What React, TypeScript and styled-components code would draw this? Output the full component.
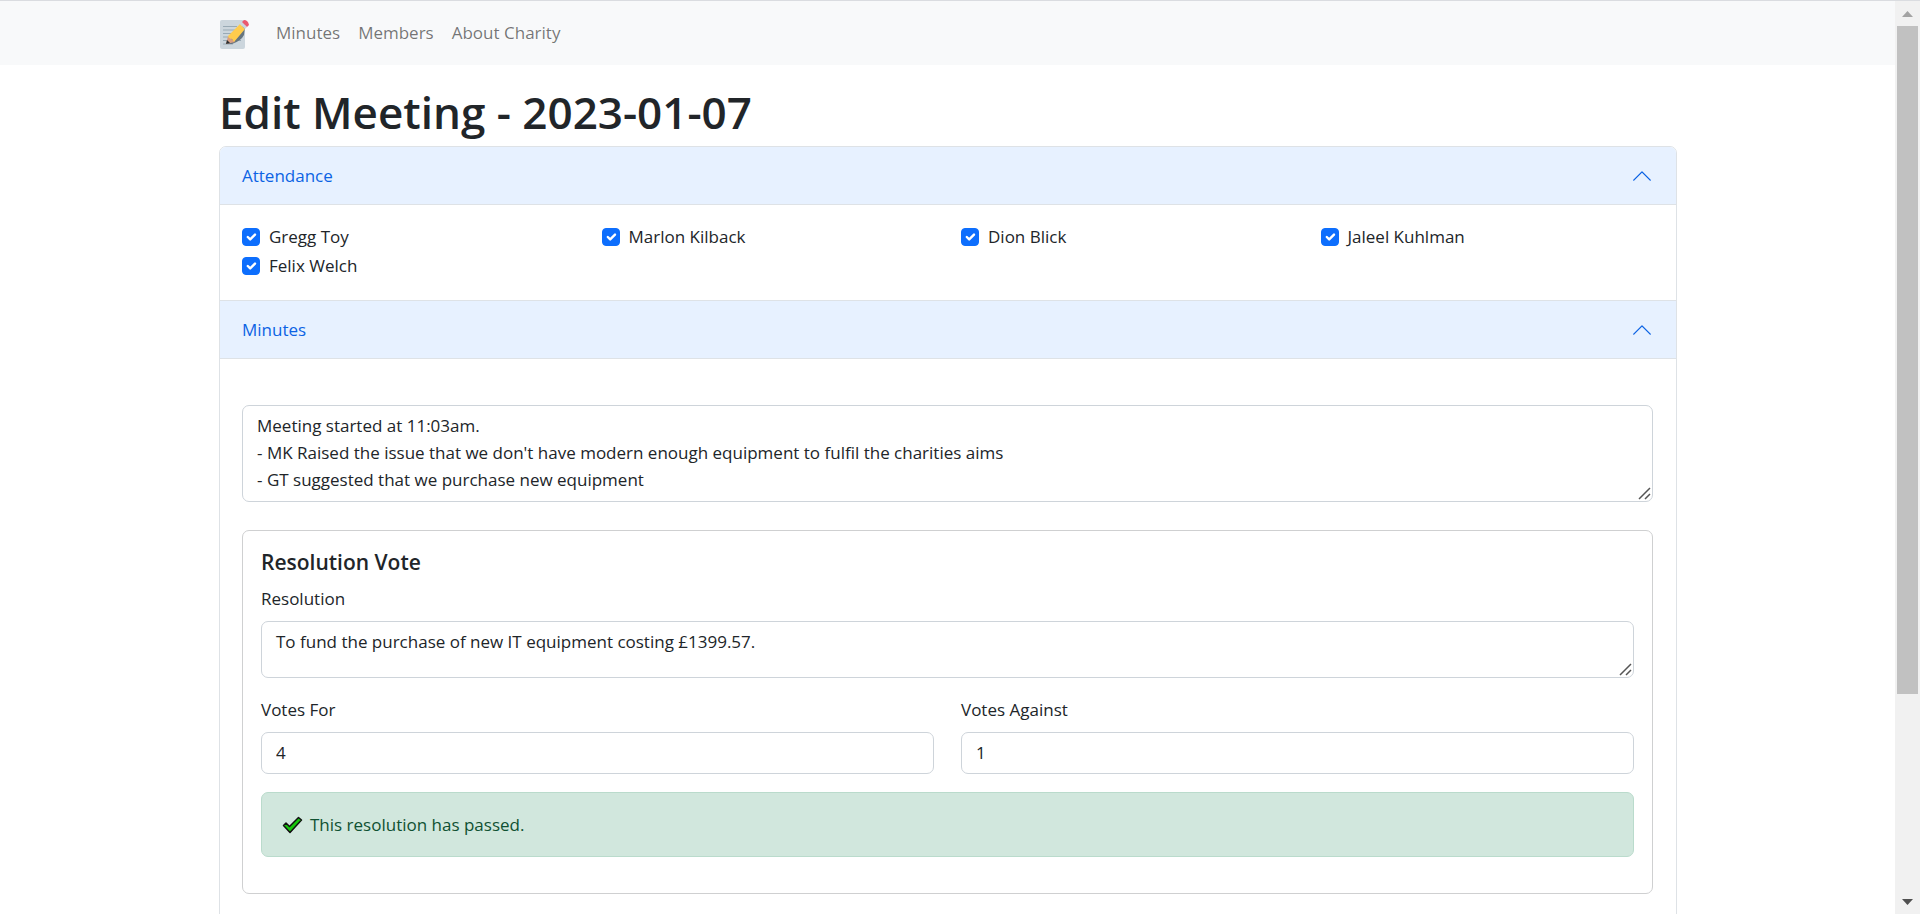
import React, { useState } from "react";
import styled, { createGlobalStyle } from "styled-components";

const GlobalStyle = createGlobalStyle`
  *, *::before, *::after { box-sizing: border-box; }
  body {
    margin: 0;
    background: #fff;
    color: #212529;
    font-family: "Segoe UI", "Open Sans", "Noto Sans", sans-serif;
    font-size: 17px;
    line-height: 27px;
  }
`;

const Shell = styled.div`
  display: flex;
  height: 100vh;
  border-top: 1px solid #dadce0;
`;

const Page = styled.div`
  flex: 1;
  min-width: 0;
  overflow-y: auto;
  scrollbar-width: none;
`;

const ScrollTrack = styled.div`
  display: flex;
  flex-direction: column;
  align-items: center;
  flex: none;
  width: 25px;
  padding: 0 2px;
  background: #f1f1f1;
`;

const ScrollArrow = styled.svg`
  flex: none;
  width: 21px;
  height: 25px;
`;

const ScrollThumb = styled.div`
  flex: 668;
  width: 100%;
  background: #c1c1c1;
`;

const ScrollRest = styled.div`
  flex: 195;
`;

const Container = styled.div`
  max-width: 1485px;
  margin: 0 auto;
  padding: 0 13px 0 14px;
`;

const Navbar = styled.nav`
  background: #f8f9fa;
`;

const NavInner = styled(Container)`
  display: flex;
  align-items: center;
  height: 64px;
`;

const Brand = styled.a`
  display: flex;
  margin-right: 18px;
  padding-top: 2px;
`;

const Logo = styled.svg`
  width: 30px;
  height: 32px;
`;

const NavLink = styled.a`
  padding: 8px 9px 10px;
  color: rgba(0, 0, 0, 0.55);
  text-decoration: none;
`;

const Title = styled.h1`
  margin: 20px 0 7px;
  font-size: 44px;
  font-weight: 600;
  line-height: 54px;
`;

const Accordion = styled.main`
  border: 1px solid #dee2e6;
  border-radius: 7px;
  overflow: hidden;
`;

const Section = styled.section`
  & + & {
    border-top: 1px solid #dee2e6;
  }
`;

const SectionHeading = styled.h2`
  margin: 0;
  font: inherit;
`;

const SectionButton = styled.button`
  display: flex;
  align-items: center;
  justify-content: space-between;
  width: 100%;
  height: 58px;
  padding: 0 23px 0 22px;
  border: 0;
  border-bottom: 1px solid #dee2e6;
  background: #e7f1ff;
  color: #0c63e4;
  font: inherit;
  text-align: left;
  cursor: pointer;
`;

const Chevron = styled.svg<{ $open: boolean }>`
  width: 22px;
  height: 22px;
  transform: ${(p) => (p.$open ? "rotate(180deg)" : "none")};
`;

const SectionBody = styled.div`
  padding: 18px 23px 19px 22px;
`;

const MemberGrid = styled.div`
  display: grid;
  grid-template-columns: repeat(4, 1fr);
  column-gap: 27px;
  row-gap: 2px;
  padding-bottom: 2px;
`;

const Member = styled.label`
  display: flex;
  align-items: center;
  gap: 9px;
`;

const Checkbox = styled.input`
  appearance: none;
  width: 18px;
  height: 18px;
  margin: 0;
  border: 1px solid #ced4da;
  border-radius: 4px;
  &:checked {
    border-color: #0d6efd;
    background: #0d6efd
      url("data:image/svg+xml,%3Csvg xmlns='http://www.w3.org/2000/svg' viewBox='0 0 20 20'%3E%3Cpath fill='none' stroke='%23fff' stroke-linecap='round' stroke-linejoin='round' stroke-width='3' d='m6 10 3 3 6-6'/%3E%3C/svg%3E")
      center / contain no-repeat;
  }
`;

const MinutesField = styled.div`
  margin: 28px 0;
`;

const TextAreaWrap = styled.div`
  position: relative;
  display: flex;
`;

const TextArea = styled.textarea`
  display: block;
  width: 100%;
  padding: 6px 14px 8px;
  border: 1px solid #ced4da;
  border-radius: 7px;
  background: #fff;
  color: inherit;
  font: inherit;
  resize: none;
  overflow: hidden;
`;

const MinutesArea = styled(TextArea)`
  height: 97px;
`;

const ResolutionArea = styled(TextArea)`
  height: 57px;
`;

const Grip = styled.svg`
  position: absolute;
  right: 2px;
  bottom: 2px;
  width: 13px;
  height: 13px;
`;

const Card = styled.section`
  margin-bottom: 28px;
  padding: 18px;
  border: 1px solid #cfd0d1;
  border-radius: 7px;
`;

const CardTitle = styled.h3`
  margin: 0 0 9px;
  font-size: 21px;
  font-weight: 600;
  line-height: 27px;
`;

const Field = styled.div`
  margin-bottom: 18px;
`;

const Label = styled.label`
  display: block;
  margin-bottom: 9px;
`;

const VoteGrid = styled.div`
  display: grid;
  grid-template-columns: 1fr 1fr;
  column-gap: 27px;
`;

const Input = styled.input`
  display: block;
  width: 100%;
  height: 42px;
  padding: 0 14px 2px;
  border: 1px solid #ced4da;
  border-radius: 7px;
  color: inherit;
  font: inherit;
`;

const Alert = styled.div`
  display: flex;
  align-items: center;
  gap: 7px;
  margin-bottom: 18px;
  padding: 18px 20px;
  border: 1px solid #badbcc;
  border-radius: 7px;
  background: #d1e7dd;
  color: #0f5132;
`;

const Tick = styled.svg`
  width: 21px;
  height: 18px;
`;

const members = ["Gregg Toy", "Marlon Kilback", "Dion Blick", "Jaleel Kuhlman", "Felix Welch"];

const notes = `Meeting started at 11:03am.
- MK Raised the issue that we don't have modern enough equipment to fulfil the charities aims
- GT suggested that we purchase new equipment`;

function ResizeGrip() {
  return (
    <Grip viewBox="0 0 13 13" aria-hidden="true">
      <path d="M1 12 12 1M7 12l5-5" stroke="#555" strokeWidth="1.5" />
    </Grip>
  );
}

function AccordionSection({ title, children }: { title: string; children: React.ReactNode }) {
  const [open, setOpen] = useState(true);
  return (
    <Section>
      <SectionHeading>
        <SectionButton type="button" aria-expanded={open} onClick={() => setOpen(!open)}>
          {title}
          <Chevron $open={open} viewBox="0 0 16 16" fill="currentColor" aria-hidden="true">
            <path d="M1.646 4.646a.5.5 0 0 1 .708 0L8 10.293l5.646-5.647a.5.5 0 0 1 .708.708l-6 6a.5.5 0 0 1-.708 0l-6-6a.5.5 0 0 1 0-.708z" />
          </Chevron>
        </SectionButton>
      </SectionHeading>
      {open && <SectionBody>{children}</SectionBody>}
    </Section>
  );
}

export default function App() {
  return (
    <>
      <GlobalStyle />
      <Shell>
        <Page>
          <Navbar>
            <NavInner>
              <Brand href="#" aria-label="Home">
                <Logo viewBox="0 0 30 32" aria-hidden="true">
                  <rect x="1" y="2" width="25" height="29" rx="2" fill="#ccd6dd" />
                  <path d="M4 8.500h14M4 12h12M4 15.500h18M4 19h18M4 22.500h18M4 26h10" stroke="#99aab5" strokeWidth="1" />
                  <path d="m8 26 5 0q9-3 12-9l1-8-4-1z" fill="#66757f" />
                  <path d="m7 26 2-8 7 6z" fill="#d99e82" />
                  <path d="m7 26 1-4 3 3z" fill="#292f33" />
                  <path d="M9 18 21 6l5 5-11 13-2-3-3-1z" fill="#ffcc4d" />
                  <path d="m21 6 2-2 5 5-2 2z" fill="#ccd6dd" />
                  <path d="m23 4 2-2q4 0 5 5l-2 2z" fill="#ea596e" />
                </Logo>
              </Brand>
              <NavLink href="#minutes">Minutes</NavLink>
              <NavLink href="#members">Members</NavLink>
              <NavLink href="#about">About Charity</NavLink>
            </NavInner>
          </Navbar>
          <Container>
            <Title>Edit Meeting - 2023-01-07</Title>
            <Accordion>
              <AccordionSection title="Attendance">
                <MemberGrid>
                  {members.map((name) => (
                    <Member key={name}>
                      <Checkbox type="checkbox" defaultChecked />
                      {name}
                    </Member>
                  ))}
                </MemberGrid>
              </AccordionSection>
              <AccordionSection title="Minutes">
                <MinutesField>
                  <TextAreaWrap>
                    <MinutesArea aria-label="Meeting notes" defaultValue={notes} />
                    <ResizeGrip />
                  </TextAreaWrap>
                </MinutesField>
                <Card>
                  <CardTitle>Resolution Vote</CardTitle>
                  <Field>
                    <Label htmlFor="resolution">Resolution</Label>
                    <TextAreaWrap>
                      <ResolutionArea
                        id="resolution"
                        defaultValue="To fund the purchase of new IT equipment costing £1399.57."
                      />
                      <ResizeGrip />
                    </TextAreaWrap>
                  </Field>
                  <VoteGrid>
                    <Field>
                      <Label htmlFor="votes-for">Votes For</Label>
                      <Input id="votes-for" inputMode="numeric" defaultValue="4" />
                    </Field>
                    <Field>
                      <Label htmlFor="votes-against">Votes Against</Label>
                      <Input id="votes-against" inputMode="numeric" defaultValue="1" />
                    </Field>
                  </VoteGrid>
                  <Alert role="status">
                    <Tick viewBox="0 0 21 18" aria-hidden="true">
                      <path d="m1.500 9.500 2.500-2.500 3.500 3.500 9-9 3 2.500-11.500 12.500z" fill="#16c60c" stroke="#111" strokeWidth="1.500" strokeLinejoin="round" />
                    </Tick>
                    This resolution has passed.
                  </Alert>
                </Card>
              </AccordionSection>
            </Accordion>
          </Container>
        </Page>
        <ScrollTrack aria-hidden="true">
          <ScrollArrow viewBox="0 0 21 25">
            <path d="M5 16h11l-5.500-6z" fill="#a3a3a3" />
          </ScrollArrow>
          <ScrollThumb />
          <ScrollRest />
          <ScrollArrow viewBox="0 0 21 25">
            <path d="M5 10h11l-5.500 6z" fill="#505050" />
          </ScrollArrow>
        </ScrollTrack>
      </Shell>
    </>
  );
}
